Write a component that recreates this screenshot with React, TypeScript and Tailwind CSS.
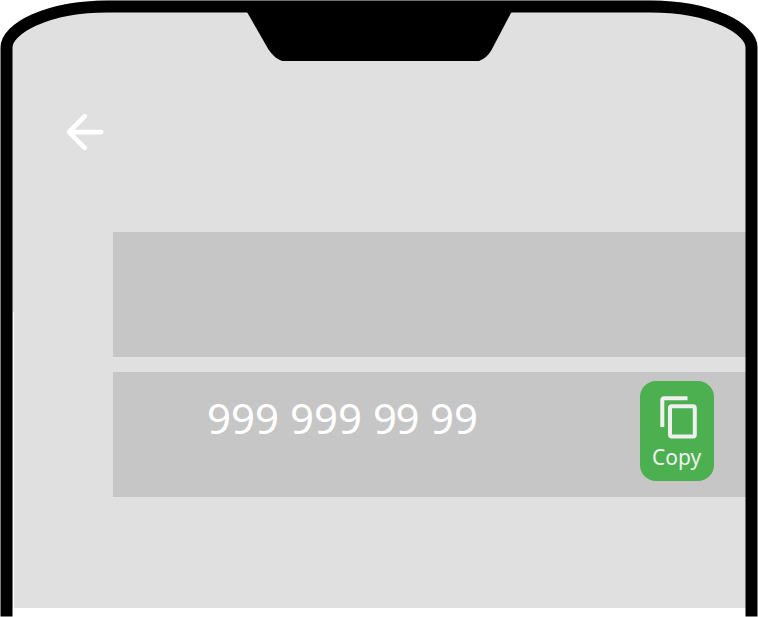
function PhoneFrame() {
  return (
    <svg className="pointer-events-none absolute inset-0" width="758" height="617" viewBox="0 0 758 617" fill="none">
      <path d="M0 0H108C46 0 0.5 26 0.5 47.500Z" fill="white" />
      <path d="M758 0H650C712 0 757.5 26 757.5 47.500Z" fill="white" />
      <path d="M13 312H14V608H13Z" fill="white" />
      <path
        d="M6.5 616.5V47.500C6.5 29 46 6.500 108 6.500H650C712 6.500 751.5 29 751.5 47.500V616.5"
        stroke="black"
        strokeWidth="12"
      />
      <path d="M247 12L268.5 49.500Q274 58 282 61H479Q487 58 491.500 50L511.500 12Z" fill="black" />
    </svg>
  );
}

function BackArrow() {
  return (
    <svg className="block" width="40" height="40" viewBox="0 0 40 40" fill="none" stroke="white" strokeWidth="4.8" strokeLinecap="round" strokeLinejoin="round">
      <path d="M19.700 4.200L4 20.100L19.700 35.900M4 20.100H36.200" />
    </svg>
  );
}

function CopyIcon() {
  return (
    <svg className="block" width="38" height="44" viewBox="0 0 38 44" fill="none" stroke="#f0f0f0" strokeWidth="4">
      <path d="M3.300 32V5.300Q3.300 3.300 5.300 3.300H28.500" />
      <rect x="11" y="11.200" width="24.800" height="30.300" rx="1.800" />
    </svg>
  );
}

export default function App() {
  return (
    <div className="relative h-[617px] w-[758px] overflow-hidden bg-white font-['Noto_Sans',sans-serif]">
      <main className="mx-[12px] h-[608px] bg-[#e0e0e0]">
        <header className="h-[232px] pt-[112px] pl-[53px]">
          <BackArrow />
        </header>
        <section className="ml-[101px] flex flex-col gap-[15px]">
          <div className="h-[125px] bg-[#c6c6c6]" />
          <div className="flex h-[125px] bg-[#c6c6c6]">
            <div className="flex w-[526.5px] pt-[17px] pl-[94px] text-[42px] leading-[57px] text-white">
              <span className="w-[83px]">999</span>
              <span className="w-[83px]">999</span>
              <span className="w-[57px] tracking-[-1.500px]">99</span>
              <span>99</span>
            </div>
            <button className="mt-[9px] flex h-[100px] w-[74.5px] flex-col items-center rounded-[16px] bg-[#4caf50] pt-[14px] text-[#f0f0f0]">
              <span className="ml-[2.5px]"><CopyIcon /></span>
              <span className="mt-[4px] mr-[0.5px] text-[21px] leading-[28px]">Copy</span>
            </button>
          </div>
        </section>
      </main>
      <PhoneFrame />
    </div>
  );
}
